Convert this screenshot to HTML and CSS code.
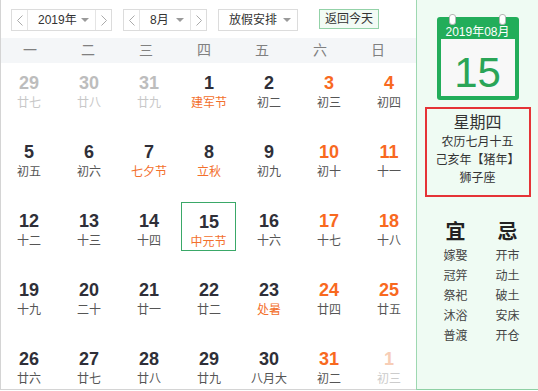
FILE: index.html
```html
<!DOCTYPE html>
<html lang="zh-CN">
<head>
    <meta charset="UTF-8">
    <meta name="viewport" content="width=device-width, initial-scale=1.0">
    <title>万年历</title>
    <link rel="stylesheet" href="styles.css">
</head>
<body>
    <div class="calendar">
        <div class="main">
            <div class="toolbar">
                <div class="picker year">
                    <span class="arrow"><svg width="6" height="11"><polyline points="5.5,0.5 0.5,5.5 5.5,10.5" fill="none" stroke="#aaa"/></svg></span>
                    <span class="value">2019年 <i class="caret"></i></span>
                    <span class="arrow"><svg width="6" height="11"><polyline points="0.5,0.5 5.5,5.5 0.5,10.5" fill="none" stroke="#aaa"/></svg></span>
                </div>
                <div class="picker month">
                    <span class="arrow"><svg width="6" height="11"><polyline points="5.5,0.5 0.5,5.5 5.5,10.5" fill="none" stroke="#aaa"/></svg></span>
                    <span class="value">8月 <i class="caret"></i></span>
                    <span class="arrow"><svg width="6" height="11"><polyline points="0.5,0.5 5.5,5.5 0.5,10.5" fill="none" stroke="#aaa"/></svg></span>
                </div>
                <div class="picker holiday">
                    <span class="value">放假安排 <i class="caret"></i></span>
                </div>
                <button class="today-btn">返回今天</button>
            </div>

            <div class="weekdays">
                <span>一</span><span>二</span><span>三</span><span>四</span><span>五</span><span>六</span><span>日</span>
            </div>

            <div class="days">
                <div class="day other"><b>29</b><span>廿七</span></div>
                <div class="day other"><b>30</b><span>廿八</span></div>
                <div class="day other"><b>31</b><span>廿九</span></div>
                <div class="day fest"><b>1</b><span>建军节</span></div>
                <div class="day"><b>2</b><span>初二</span></div>
                <div class="day weekend"><b>3</b><span>初三</span></div>
                <div class="day weekend"><b>4</b><span>初四</span></div>

                <div class="day"><b>5</b><span>初五</span></div>
                <div class="day"><b>6</b><span>初六</span></div>
                <div class="day fest"><b>7</b><span>七夕节</span></div>
                <div class="day fest"><b>8</b><span>立秋</span></div>
                <div class="day"><b>9</b><span>初九</span></div>
                <div class="day weekend"><b>10</b><span>初十</span></div>
                <div class="day weekend"><b>11</b><span>十一</span></div>

                <div class="day"><b>12</b><span>十二</span></div>
                <div class="day"><b>13</b><span>十三</span></div>
                <div class="day"><b>14</b><span>十四</span></div>
                <div class="day fest today"><b>15</b><span>中元节</span></div>
                <div class="day"><b>16</b><span>十六</span></div>
                <div class="day weekend"><b>17</b><span>十七</span></div>
                <div class="day weekend"><b>18</b><span>十八</span></div>

                <div class="day"><b>19</b><span>十九</span></div>
                <div class="day"><b>20</b><span>二十</span></div>
                <div class="day"><b>21</b><span>廿一</span></div>
                <div class="day"><b>22</b><span>廿二</span></div>
                <div class="day fest"><b>23</b><span>处暑</span></div>
                <div class="day weekend"><b>24</b><span>廿四</span></div>
                <div class="day weekend"><b>25</b><span>廿五</span></div>

                <div class="day"><b>26</b><span>廿六</span></div>
                <div class="day"><b>27</b><span>廿七</span></div>
                <div class="day"><b>28</b><span>廿八</span></div>
                <div class="day"><b>29</b><span>廿九</span></div>
                <div class="day"><b>30</b><span>八月大</span></div>
                <div class="day weekend"><b>31</b><span>初二</span></div>
                <div class="day next"><b>1</b><span>初三</span></div>
            </div>
        </div>

        <div class="side">
            <div class="badge">
                <i class="ring left"></i>
                <i class="ring right"></i>
                <div class="badge-head">2019年08月</div>
                <div class="badge-body">15</div>
            </div>

            <div class="info">
                <div class="weekday">星期四</div>
                <div>农历七月十五</div>
                <div>己亥年【猪年】</div>
                <div>狮子座</div>
            </div>

            <div class="yiji">
                <div class="col">
                    <strong>宜</strong>
                    <span>嫁娶</span>
                    <span>冠笄</span>
                    <span>祭祀</span>
                    <span>沐浴</span>
                    <span>普渡</span>
                </div>
                <div class="col">
                    <strong>忌</strong>
                    <span>开市</span>
                    <span>动土</span>
                    <span>破土</span>
                    <span>安床</span>
                    <span>开仓</span>
                </div>
            </div>
        </div>
    </div>
</body>
</html>
```

FILE: styles.css
```css
body {
    margin: 0;
    background-color: #ffffff;
    font-family: 'Liberation Sans', 'Noto Sans CJK SC', sans-serif;
    color: #333;
}

.calendar {
    display: flex;
    width: 538px;
    height: 390px;
    overflow: hidden;
}

.main {
    width: 416px;
    height: 390px;
    box-sizing: border-box;
    border-left: 1px solid #d4d4d4;
    border-bottom: 1px solid #d4d4d4;
    overflow: hidden;
}

/* toolbar */
.toolbar {
    display: flex;
    align-items: flex-start;
    height: 38px;
    box-sizing: border-box;
    padding: 9px 0 0 10px;
}

.picker {
    display: flex;
    height: 22px;
    box-sizing: border-box;
    border: 1px solid #dcdcdc;
    background-color: #fff;
    font-size: 12px;
    margin-right: 11px;
}

.picker .arrow {
    display: flex;
    align-items: center;
    justify-content: center;
    width: 15px;
}

.picker .arrow:first-child {
    border-right: 1px solid #e4e4e4;
}

.picker .arrow:last-child {
    border-left: 1px solid #e4e4e4;
}

.picker .value {
    display: flex;
    align-items: center;
    justify-content: space-between;
    line-height: 20px;
    padding: 0 6px 0 10px;
}

.year .value { width: 51px; }
.month .value { width: 34px; }
.holiday .value { width: 62px; }

.caret {
    display: inline-block;
    width: 0;
    height: 0;
    border-left: 4px solid transparent;
    border-right: 4px solid transparent;
    border-top: 4px solid #9a9a9a;
}

.today-btn {
    margin-left: 10px;
    height: 20px;
    padding: 0 5px;
    border: 1px solid #93d2a8;
    background-color: #f2fbf5;
    color: #333;
    font-family: inherit;
    font-size: 12px;
    line-height: 18px;
    cursor: pointer;
}

/* week header */
.weekdays {
    display: grid;
    grid-template-columns: repeat(7, 58px);
    height: 25px;
    background-color: #f4f6f8;
    font-size: 14px;
    line-height: 25px;
    color: #808080;
    text-align: center;
}

/* day grid */
.days {
    display: grid;
    grid-template-columns: repeat(7, 60px);
    grid-auto-rows: 69px;
    width: 420px;
    margin-left: -2px;
    text-align: center;
}

.day {
    box-sizing: border-box;
    padding-top: 9px;
}

.day b {
    display: block;
    font-size: 18px;
    line-height: 22px;
    color: #2f2f38;
}

.day span {
    display: block;
    font-size: 12px;
    line-height: 18px;
    color: #555;
}

.day.weekend b { color: #f8691f; }
.day.fest span { color: #f36f2c; }

.day.other b { color: #bdbdbd; }
.day.other span { color: #c8c8c8; }

.day.next b { color: #f7cdb6; }
.day.next span { color: #cccccc; }

.day.today {
    align-self: start;
    width: 55px;
    height: 49px;
    margin: 1px 0 0 2px;
    padding-top: 8px;
    border: 1px solid #3aa868;
}

.day.today b {
    margin-left: 1px;
}

/* side panel */
.side {
    flex: 1;
    display: flex;
    flex-direction: column;
    align-items: center;
    height: 390px;
    box-sizing: border-box;
    padding-top: 17px;
    background-color: #effbf3;
    border-left: 1px solid #9ed8b1;
    border-bottom: 1px solid #8fd0a4;
}

.badge {
    position: relative;
    width: 82px;
    box-sizing: border-box;
    padding: 0 4px 4px;
    background-color: #22ad5a;
    border-radius: 3px;
}

.ring {
    position: absolute;
    top: -3px;
    width: 5px;
    height: 9px;
    background-color: #fff;
    border: 1px solid #b5b5b5;
    border-radius: 3px;
}

.ring.left { left: 12px; }
.ring.right { left: 62px; }

.badge-head {
    height: 22px;
    box-sizing: border-box;
    padding-top: 8px;
    line-height: 14px;
    font-size: 12px;
    color: #fff;
    text-align: center;
}

.badge-body {
    height: 57px;
    box-sizing: border-box;
    padding-top: 10px;
    background-color: #f8f8f8;
    font-size: 42px;
    line-height: 47px;
    color: #2aa557;
    text-align: center;
}

.info {
    width: 106px;
    box-sizing: border-box;
    margin-top: 7px;
    padding: 4px 0 8px;
    border: 2px solid #e53336;
    font-size: 12px;
    line-height: 18px;
    color: #333;
    text-align: center;
}

.info .weekday {
    font-size: 16px;
    line-height: 20px;
}

.yiji {
    display: flex;
    gap: 12px;
    margin-top: 22px;
    padding-left: 8px;
}

.yiji .col {
    display: flex;
    flex-direction: column;
    align-items: center;
    width: 40px;
}

.yiji strong {
    font-size: 20px;
    line-height: 26px;
    color: #222;
    margin-bottom: 1px;
}

.yiji span {
    font-size: 12px;
    line-height: 20px;
    color: #444;
}
```
